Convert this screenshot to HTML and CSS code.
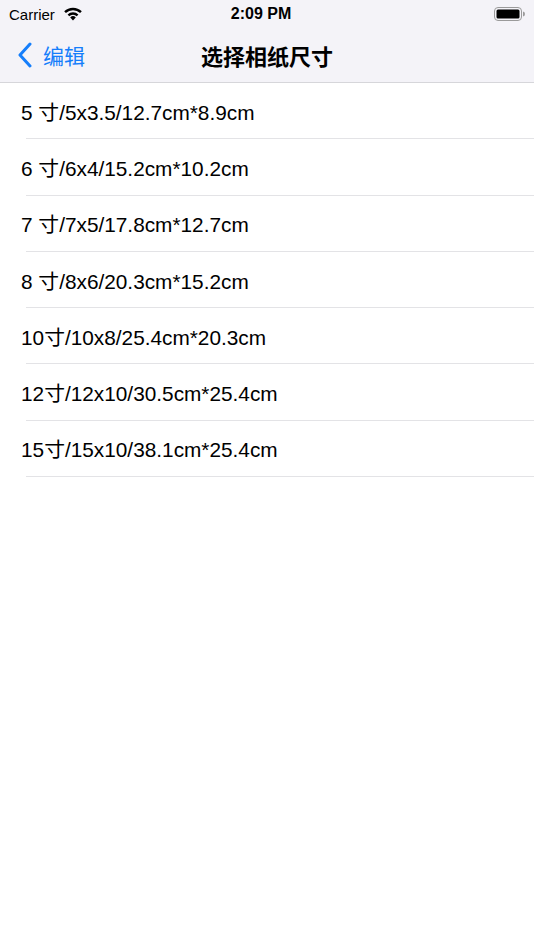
FILE: index.html
```html
<!DOCTYPE html>
<html lang="zh">
<head>
  <meta charset="UTF-8">
  <title>选择相纸尺寸</title>
  <link rel="stylesheet" href="styles.css">
</head>
<body>
  <div class="header">
    <div class="status-bar">
      <div class="status-left">
        <span>Carrier</span>
        <svg class="wifi" width="20" height="14" viewBox="0 0 20 14">
          <path d="M10 13.5 L7.2 10.4 A4 4 0 0 1 12.8 10.4 Z" fill="#000"/>
          <path d="M4.6 7.6 A7.6 7.6 0 0 1 15.4 7.6 L13.8 9.3 A5.4 5.4 0 0 0 6.2 9.3 Z" fill="#000"/>
          <path d="M1.2 4.3 A12.4 12.4 0 0 1 18.8 4.3 L17.1 6.1 A10 10 0 0 0 2.9 6.1 Z" fill="#000"/>
        </svg>
      </div>
      <div class="status-time">2:09 PM</div>
      <div class="status-right">
        <svg width="32" height="14" viewBox="0 0 32 14">
          <rect x="0.5" y="0.5" width="27" height="13" rx="3.5" fill="none" stroke="#9a9a9a"/>
          <rect x="2.5" y="2.5" width="23" height="9" rx="1.5" fill="#000"/>
          <path d="M29 4.5 a2 2.5 0 0 1 0 5 Z" fill="#9a9a9a"/>
        </svg>
      </div>
    </div>
    <div class="nav-bar">
      <div class="nav-back">
        <svg width="16" height="26" viewBox="0 0 16 26">
          <path d="M13 2 L3 13 L13 24" fill="none" stroke="#157efb" stroke-width="3" stroke-linecap="round" stroke-linejoin="round"/>
        </svg>
        <span>编辑</span>
      </div>
      <div class="nav-title">选择相纸尺寸</div>
    </div>
  </div>

  <ul class="size-list">
    <li>5 寸/5x3.5/12.7cm*8.9cm</li>
    <li>6 寸/6x4/15.2cm*10.2cm</li>
    <li>7 寸/7x5/17.8cm*12.7cm</li>
    <li>8 寸/8x6/20.3cm*15.2cm</li>
    <li>10寸/10x8/25.4cm*20.3cm</li>
    <li>12寸/12x10/30.5cm*25.4cm</li>
    <li>15寸/15x10/38.1cm*25.4cm</li>
  </ul>
</body>
</html>
```

FILE: styles.css
```css
body {
  margin: 0;
  background-color: white;
  font-family: "Liberation Sans", "Noto Sans CJK SC", sans-serif;
  color: #000;
}
.header {
  background-color: #f4f3f8;
  border-bottom: 1px solid #d6d6da;
}
.status-bar {
  height: 28px;
  display: flex;
  align-items: center;
  justify-content: space-between;
  padding: 0 8px 0 9px;
  position: relative;
  font-size: 15px;
}
.status-left {
  display: flex;
  align-items: center;
  gap: 8px;
}
.status-time {
  position: absolute;
  left: 0;
  right: 12px;
  text-align: center;
  font-size: 16px;
  font-weight: bold;
  pointer-events: none;
}
.status-right {
  display: flex;
  align-items: center;
}
.nav-bar {
  height: 54px;
  display: flex;
  align-items: center;
  position: relative;
}
.nav-back {
  display: flex;
  align-items: center;
  gap: 10px;
  padding-left: 17px;
  color: #157efb;
  font-size: 21px;
}
.nav-title {
  position: absolute;
  left: 0;
  right: 0;
  text-align: center;
  font-size: 22px;
  font-weight: bold;
  pointer-events: none;
}
.size-list {
  list-style: none;
  margin: 0;
  padding: 0;
}
.size-list li {
  height: 56.3px;
  box-sizing: border-box;
  display: flex;
  align-items: center;
  padding-left: 21px;
  padding-bottom: 1px;
  font-size: 20.8px;
  position: relative;
}
.size-list li::after {
  content: "";
  position: absolute;
  left: 26px;
  right: 0;
  bottom: 0;
  border-bottom: 1px solid #e3e3e6;
}
```
